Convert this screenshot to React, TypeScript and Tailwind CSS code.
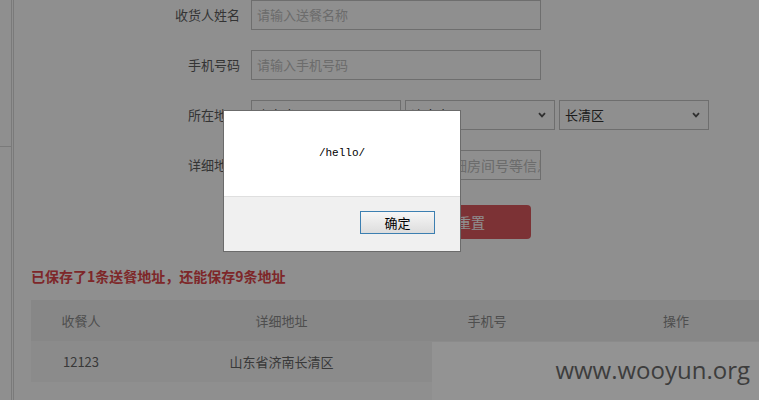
import React from 'react';

const cn = '"Noto Sans CJK SC", "Liberation Sans", sans-serif';

const FieldRow: React.FC<{ label: string; children: React.ReactNode }> = ({ label, children }) => (
    <div className="flex items-center gap-[11px] h-[30px]">
        <span className="w-[100px] text-right text-[13px] text-[#5e5e5e]">{label}</span>
        {children}
    </div>
);

const TextBox: React.FC<{ placeholder: string; size?: string }> = ({ placeholder, size = 'text-[13px]' }) => (
    <div className="w-[290px] h-[30px] border border-[#c4c4c4] bg-white flex items-center px-[5px] overflow-hidden">
        <span className={`${size} text-[#c0c0c0] whitespace-nowrap`}>{placeholder}</span>
    </div>
);

const Chevron = () => (
    <svg width="8" height="6" viewBox="0 0 8 6" className="shrink-0">
        <path d="M1 1.2 L4 4.4 L7 1.2" fill="none" stroke="#555" strokeWidth="1.8" />
    </svg>
);

const SelectBox: React.FC<{ value: string }> = ({ value }) => (
    <div className="w-[150px] h-[30px] border border-[#c4c4c4] bg-white flex items-center justify-between pl-[5px] pr-[8px]">
        <span className="text-[13px] text-[#333]">{value}</span>
        <Chevron />
    </div>
);

const columns = 'grid grid-cols-[100px_301px_110px_268px] items-center text-center text-[13px]';

const App: React.FC = () => {
    return (
        <div className="relative w-[759px] h-[400px] overflow-hidden bg-white" style={{ fontFamily: cn }}>
            <div className="flex h-full">
                {/* sidebar edge */}
                <div className="w-[11px] shrink-0 flex flex-col">
                    <div className="h-[146px]" />
                    <div className="h-px bg-[#dadada]" />
                </div>
                <div className="w-[3px] shrink-0 border-x border-[#dadada]" />

                <div className="flex-1 flex flex-col">
                    <div className="ml-[126px] flex flex-col gap-[20px]">
                        <FieldRow label="收货人姓名">
                            <TextBox placeholder="请输入送餐名称" />
                        </FieldRow>
                        <FieldRow label="手机号码">
                            <TextBox placeholder="请输入手机号码" />
                        </FieldRow>
                        <FieldRow label="所在地区">
                            <div className="flex gap-[4px]">
                                <SelectBox value="山东省" />
                                <SelectBox value="济南市" />
                                <SelectBox value="长清区" />
                            </div>
                        </FieldRow>
                        <FieldRow label="详细地址">
                            <TextBox size="text-[14px]" placeholder="请输入详细地址，如楼层门牌详细房间号等信息" />
                        </FieldRow>
                    </div>

                    <div className="ml-[267px] mt-[25px] flex gap-[10px]">
                        <button className="w-[120px] h-[34px] rounded-[4px] bg-[#de5a5f] text-white text-[14px]">保存</button>
                        <button className="w-[120px] h-[34px] rounded-[4px] bg-[#de5a5f] text-white text-[14px]">重置</button>
                    </div>

                    <p className="ml-[17px] mt-[27px] h-[20px] leading-[20px] text-[14px] font-bold text-[#e0464a]">
                        已保存了1条送餐地址，还能保存9条地址
                    </p>

                    <div className="ml-[17px] mt-[14px] w-[779px]">
                        <div className={`${columns} h-[41px] bg-[#f1f1f1] text-[#8c8c8c]`}>
                            <span>收餐人</span>
                            <span>详细地址</span>
                            <span>手机号</span>
                            <span>操作</span>
                        </div>
                        <div className={`${columns} h-[41px] bg-[#f8f8f8] text-[#666]`}>
                            <span>12123</span>
                            <span>山东省济南长清区</span>
                            <span />
                            <span />
                        </div>
                    </div>
                </div>
            </div>

            {/* modal backdrop */}
            <div className="absolute inset-0 bg-black/[0.44]" />

            {/* alert dialog */}
            <div className="absolute left-[223px] top-[110px] w-[238px] h-[142px] border border-[#6b6b6b] flex flex-col">
                <div className="h-[85px] bg-white flex items-center justify-center">
                    <span className="text-[11px] text-black" style={{ fontFamily: '"Liberation Mono", monospace' }}>
                        /hello/
                    </span>
                </div>
                <div className="flex-1 bg-[#f0f0f0] border-t border-[#dfdfdf] flex justify-end items-start pt-[14px] pr-[25px]">
                    <button className="w-[75px] h-[23px] border border-[#3c7fb1] bg-gradient-to-b from-[#f6f6f6] to-[#dddddd] text-[13px] text-black leading-none">
                        确定
                    </button>
                </div>
            </div>

            {/* watermark */}
            <div className="absolute left-[432px] top-[342px] right-0 bottom-0 bg-[#939393] flex justify-end items-start pr-[9px]">
                <span
                    className="mt-[13px] text-[24px] leading-[30px] text-[#3d3d3d]"
                    style={{ fontFamily: '"Open Sans", sans-serif' }}
                >
                    www.wooyun.org
                </span>
            </div>
        </div>
    );
};

export default App;
